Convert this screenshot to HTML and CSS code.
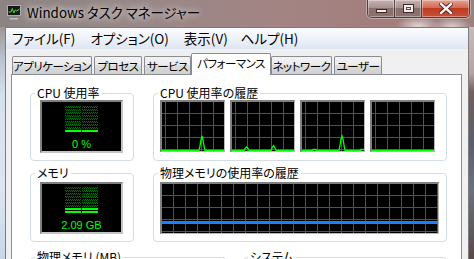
FILE: index.html
```html
<!DOCTYPE html>
<html lang="ja">
<head>
<meta charset="utf-8">
<title>Windows タスク マネージャー</title>
<link rel="stylesheet" href="styles.css">
</head>
<body>
<div class="window">
  <header class="titlebar">
    <svg class="app-icon" width="16" height="16" viewBox="0 0 16 16">
      <rect x="1.5" y="1.5" width="13" height="10" fill="#1a1a1a" stroke="#a9aeb4"/>
      <polyline points="2.5,8 5,8 6.3,4.5 7.8,9 9.3,6 10.8,7 13.5,5" fill="none" stroke="#3ce23c" stroke-width="1"/>
      <rect x="6.5" y="12" width="3" height="2" fill="#7d838a"/>
      <rect x="4" y="14" width="8" height="1.5" fill="#c0c4ca"/>
    </svg>
    <span class="title">Windows タスク マネージャー</span>
    <div class="caption">
      <span class="cbtn cmin"><span class="glyph-min"></span></span>
      <span class="cbtn cmax"><span class="glyph-max"></span></span>
      <span class="cbtn cclose">
        <svg width="14" height="11" viewBox="0 0 14 11">
          <path d="M2 1 L12 10 M12 1 L2 10" stroke="#3a2320" stroke-width="4.2" stroke-linecap="square"/>
          <path d="M2 1 L12 10 M12 1 L2 10" stroke="#f4f1f0" stroke-width="2.4" stroke-linecap="square"/>
        </svg>
      </span>
    </div>
  </header>
  <div class="frame">
    <div class="side side-left"></div>
    <main class="client">
      <nav class="menubar">
        <span class="menu">ファイル(F)</span>
        <span class="menu">オプション(O)</span>
        <span class="menu">表示(V)</span>
        <span class="menu">ヘルプ(H)</span>
      </nav>
      <div class="tabs">
        <span class="tab tab-apps">アプリケーション</span>
        <span class="tab tab-proc">プロセス</span>
        <span class="tab tab-svc">サービス</span>
        <span class="tab tab-perf active">パフォーマンス</span>
        <span class="tab tab-net">ネットワーク</span>
        <span class="tab tab-user">ユーザー</span>
      </div>
      <section class="panel">
        <div class="row row-top">
          <div class="group group-meter">
            <div class="group-title">CPU 使用率</div>
            <div class="display">
              <div class="meter">
                <div class="bar"><i class="off off-cpu"></i><i class="on on-cpu"></i></div>
                <div class="bar"><i class="off off-cpu"></i><i class="on on-cpu"></i></div>
              </div>
              <div class="readout">0 %</div>
            </div>
          </div>
          <div class="group group-hist">
            <div class="group-title">CPU 使用率の履歴</div>
            <div class="graphs">
              <div class="graph">
                <svg class="trace" viewBox="0 0 62 49" preserveAspectRatio="none">
                  <polyline points="0,48.5 37,48.5 38,44 39,38 40,34 41,38 42,44 43,48.5 62,48.5"/>
                </svg>
              </div>
              <div class="graph">
                <svg class="trace" viewBox="0 0 62 49" preserveAspectRatio="none">
                  <polyline points="0,48.5 12,48.5 13,46.5 14.5,45 16,46.5 17,48.5 39,48.5 40,46 41.5,43.5 43,46 44,48.5 62,48.5"/>
                </svg>
              </div>
              <div class="graph">
                <svg class="trace" viewBox="0 0 62 49" preserveAspectRatio="none">
                  <polyline points="0,48.5 11,48.5 11,47.5 14,47.5 14,48.5 37,48.5 38,43 39,37 40,34 41,37 42,43 43,48.5 59,48.5 59,47.5 62,47.5"/>
                </svg>
              </div>
              <div class="graph">
                <svg class="trace" viewBox="0 0 62 49" preserveAspectRatio="none">
                  <polyline points="0,48.5 62,48.5"/>
                </svg>
              </div>
            </div>
          </div>
        </div>
        <div class="row row-mid">
          <div class="group group-meter">
            <div class="group-title">メモリ</div>
            <div class="display display-mem">
              <div class="meter">
                <div class="bar"><i class="off off-mem"></i><i class="on on-mem"></i></div>
                <div class="bar"><i class="off off-mem"></i><i class="on on-mem"></i></div>
              </div>
              <div class="readout">2.09 GB</div>
            </div>
          </div>
          <div class="group group-hist">
            <div class="group-title">物理メモリの使用率の履歴</div>
            <div class="graph graph-wide">
              <div class="mem-line"></div>
            </div>
          </div>
        </div>
        <div class="row row-bottom">
          <div class="group group-phys">
            <div class="group-title">物理メモリ (MB)</div>
          </div>
          <div class="group group-sys">
            <div class="group-title">システム</div>
          </div>
        </div>
      </section>
    </main>
    <div class="side side-right"></div>
  </div>
</div>
</body>
</html>
```

FILE: styles.css
```css
* { box-sizing: border-box; }

html, body {
  margin: 0;
  padding: 0;
}

body {
  width: 474px;
  height: 259px;
  overflow: hidden;
  font-family: "Noto Sans CJK JP", "Noto Sans", sans-serif;
  font-feature-settings: "palt";
  color: #000;
  background:
    radial-gradient(ellipse 22px 10px at 418px 26px, rgba(236, 226, 226, 0.85), rgba(236, 226, 226, 0) 100%),
    radial-gradient(ellipse 20px 10px at 452px 27px, rgba(236, 226, 226, 0.8), rgba(236, 226, 226, 0) 100%),
    linear-gradient(to right, #8c8483 0%, #978887 30%, #a38483 60%, #a27f7d 80%, #9c7f7e 100%);
}

.window {
  display: flex;
  flex-direction: column;
  height: 259px;
}

/* ---------- title bar ---------- */
.titlebar {
  height: 27px;
  flex: none;
  display: flex;
  align-items: flex-start;
  padding-left: 6px;
}

.app-icon {
  margin-top: 4px;
  flex: none;
}

.title {
  margin-left: 5px;
  margin-top: 3px;
  font-size: 13.4px;
  line-height: 18px;
  white-space: nowrap;
  text-shadow: 0 0 6px rgba(255, 255, 255, 0.9), 0 0 12px rgba(255, 255, 255, 0.6);
}

.caption {
  margin-left: auto;
  margin-right: 4px;
  display: flex;
  height: 18px;
  border: 1px solid rgba(60, 40, 40, 0.75);
  border-top: none;
  border-radius: 0 0 5px 5px;
  overflow: hidden;
  box-shadow: 0 0 0 1px rgba(255, 255, 255, 0.35);
}

.cbtn {
  display: flex;
  align-items: center;
  justify-content: center;
  height: 100%;
  box-shadow: inset 0 0 0 1px rgba(255, 255, 255, 0.35);
}

.cmin, .cmax {
  width: 27px;
  background: linear-gradient(to bottom, #c7b3b2 0%, #a89190 45%, #8a6e6c 50%, #8c7270 100%);
  border-right: 1px solid rgba(60, 40, 40, 0.7);
}

.cclose {
  width: 47px;
  background: linear-gradient(to bottom, #e4a394 0%, #d46a55 45%, #be3b22 50%, #c8503a 100%);
}

.glyph-min {
  width: 11px;
  height: 4px;
  margin-top: 5px;
  background: #f2eeee;
  border: 1px solid #3b2a29;
}

.glyph-max {
  width: 11px;
  height: 9px;
  border: 1px solid #3b2a29;
  background: #f2eeee;
  box-shadow: inset 0 0 0 2px #f2eeee, inset 0 0 0 3px #5a4848;
}

/* ---------- frame ---------- */
.frame {
  flex: 1;
  display: flex;
  min-height: 0;
}

.side {
  width: 5px;
  flex: none;
}

.side-left {
  background: linear-gradient(to bottom, #9f9594 0%, #b9c3d1 14%, #d6e1ee 30%, #dce6f2 70%, #c9d6e6 100%);
}

.side-right {
  background: linear-gradient(to bottom, #c8bbbb 0%, #b4a3a2 20%, #735f5d 28%, #5b5f6c 50%, #6a7280 70%, #574a48 100%);
}

.client {
  flex: 1;
  display: flex;
  flex-direction: column;
  background: #f0f0f0;
  border: 1px solid #7c7c7c;
  border-bottom: none;
  min-width: 0;
}

/* ---------- menu ---------- */
.menubar {
  height: 21px;
  flex: none;
  display: flex;
  align-items: center;
  padding-left: 6px;
  gap: 15px;
  background: linear-gradient(to bottom, #fbfcfe 0%, #eef2f9 50%, #dfe6f3 100%);
  font-size: 13.5px;
  line-height: 17px;
}

.menu {
  white-space: nowrap;
}

.menu:last-child {
  margin-left: -2px;
}

/* ---------- tabs ---------- */
.tabs {
  display: flex;
  align-items: flex-end;
  padding: 4px 0 0 6px;
  gap: 2px;
  position: relative;
  z-index: 1;
  margin-bottom: -1px;
  font-size: 11.5px;
  letter-spacing: -0.5px;
}

.tab {
  height: 18px;
  margin-bottom: 1px;
  border: 1px solid #898c95;
  border-bottom: none;
  border-radius: 2px 2px 0 0;
  background: linear-gradient(to bottom, #f3f3f3 0%, #ebebeb 45%, #dddddd 50%, #cfcfcf 100%);
  display: flex;
  align-items: center;
  justify-content: center;
  white-space: nowrap;
  line-height: 16px;
}

.tab-apps { width: 80px; }
.tab-proc { width: 48px; }
.tab-svc  { width: 47px; }
.tab-net  { width: 61px; }
.tab-user { width: 48px; }

.tab.active {
  width: 80px;
  height: 22px;
  margin: 0 -2px 0 -2px;
  background: #fff;
  align-items: flex-start;
  padding-top: 1px;
}

/* ---------- panel ---------- */
.panel {
  flex: 1;
  margin: 0 6px 0 5px;
  background: #fff;
  border: 1px solid #898c95;
  padding: 18px 14px 0 18px;
  display: flex;
  flex-direction: column;
}

.row {
  display: flex;
  gap: 19px;
}

.row-mid {
  margin-top: 12px;
}

.row-bottom {
  margin-top: 15px;
  gap: 17px;
}

.group {
  border: 1px solid #d5dde4;
  border-radius: 4px;
  padding-bottom: 7px;
}

.group-title {
  width: fit-content;
  margin: -8px 0 0 4px;
  padding: 0 2px;
  background: #fff;
  font-size: 12px;
  line-height: 14px;
  white-space: nowrap;
}

.group-meter { width: 104px; flex: none; }
.group-hist  { flex: 1; }
.group-phys  { width: 196px; height: 40px; }
.group-sys   { flex: 1; height: 40px; }

/* ---------- meters ---------- */
.display {
  width: 83px;
  height: 53px;
  margin-left: 9px;
  background: #000;
  border-style: solid;
  border-width: 2px;
  border-color: #808080 #c4c4c4 #c4c4c4 #808080;
  padding-top: 4px;
  display: flex;
  flex-direction: column;
  align-items: center;
}

.display-mem {
  height: 52px;
  margin-top: 2px;
  padding-top: 3px;
}

.meter {
  display: flex;
  gap: 1px;
}

.bar {
  width: 16px;
  display: flex;
  flex-direction: column;
}

.bar i { display: block; }

.off {
  background:
    repeating-linear-gradient(to bottom, transparent 0 2px, #000 2px 3px),
    conic-gradient(#006b0a 0 25%, #001400 0 50%, #006b0a 0 75%, #001400 0) 0 0 / 2px 2px;
}

.off-cpu { height: 24px; }
.off-mem { height: 21px; }

.on {
  background: repeating-linear-gradient(to bottom, #00ff00 0 2px, #000 2px 3px);
}

.on-cpu { height: 3px; }
.on-mem { height: 6px; }

.readout {
  margin-top: 5px;
  font-family: "Liberation Sans", Arial, sans-serif;
  font-size: 11px;
  line-height: 12px;
  color: #00ff00;
  white-space: nowrap;
}

/* ---------- graphs ---------- */
.graphs {
  display: flex;
  gap: 5px;
  margin-left: 6px;
}

.graph {
  width: 65px;
  height: 52px;
  border-style: solid;
  border-width: 2px 1px 1px 2px;
  border-color: #808080 #b8b8b8 #b8b8b8 #808080;
  background-color: #000;
  background-image:
    linear-gradient(to right, #008040 0 1px, transparent 1px),
    linear-gradient(to bottom, #008040 0 1px, transparent 1px);
  background-size: 12px 100%, 100% 12px;
  background-position: 3px 0, 0 11px;
  position: relative;
}

.graph-wide {
  width: auto;
  margin: 2px 7px 0 6px;
  background-position: 11px 0, 0 11px;
}

.trace {
  display: block;
  width: 62px;
  height: 49px;
}

.trace polyline {
  fill: none;
  stroke: #00ff00;
  stroke-width: 1.3;
}

.mem-line {
  margin-top: 37px;
  height: 3px;
  background: #1a80ff;
}
```
